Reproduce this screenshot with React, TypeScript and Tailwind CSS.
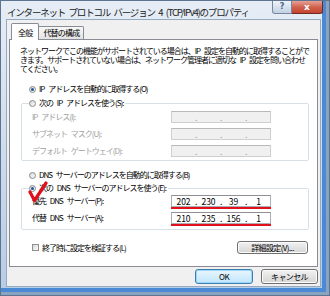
import React from 'react';

// Windows 7 style TCP/IPv4 properties dialog

function Radio({ checked }: { checked?: boolean }) {
  return (
    <span className="w-[7px] h-[7px] rounded-full border border-[#8a8a8a] bg-linear-to-br from-[#d6d6d6] to-[#fbfbfb] flex items-center justify-center shrink-0">
      {checked && <span className="w-[3px] h-[3px] rounded-full bg-[#24539f]" />}
    </span>
  );
}

function IpBox({ values, disabled }: { values?: string[]; disabled?: boolean }) {
  const segs = values || ['', '', '', ''];
  return (
    <div
      className={`w-[100px] h-[12px] border flex items-center text-[8.5px] leading-[10px] tracking-normal [word-spacing:0px] ${
        disabled ? 'border-[#cfcfcf] border-t-[#b9b9b9] bg-[#f0f0f0] text-[#a0a0a0]' : 'border-[#abadb3] border-t-[#8e9096] bg-white text-black'
      }`}
    >
      {segs.map((v, i) => (
        <React.Fragment key={i}>
          <span className="flex-1 text-center">{v}</span>
          {i < 3 && <span className="w-[2px] text-center">.</span>}
        </React.Fragment>
      ))}
    </div>
  );
}

function WinButton({ label, isDefault, className }: { label: string; isDefault?: boolean; className?: string }) {
  return (
    <div
      className={`rounded-[3px] border flex items-center justify-center text-[8px] tracking-[-0.6px] ${
        isDefault
          ? 'border-[#3c7fb1] bg-linear-to-b from-[#eaf6fd] to-[#bee6fd] shadow-[inset_0_0_0_1px_#9fd5f5]'
          : 'border-[#707070] bg-linear-to-b from-[#f2f2f2] to-[#d5d5d5] shadow-[inset_0_0_0_1px_#fcfcfc]'
      } ${className || ''}`}
    >
      {label}
    </div>
  );
}

export default function App() {
  return (
    <div className="w-[330px] h-[296px] relative overflow-hidden flex flex-col border border-[#5d7390] bg-linear-to-b from-[#e6edf6] via-[#cfdcec] to-[#b6cbe5] shadow-[inset_-3px_-3px_0_#8aa3c0,inset_-7px_-7px_0_#4a8ad4] font-['Noto_Sans_CJK_JP',sans-serif] text-black">
      {/* title bar */}
      <div className="h-[18px] flex items-start shrink-0">
        <div className="flex-1 pl-[6px] pt-[5px] text-[9.5px] leading-[12px] tracking-[-1.2px] [word-spacing:2.5px] text-[#222] whitespace-nowrap">
          インターネット プロトコル バージョン 4 (TCP/IPv4)のプロパティ
        </div>
        <div className="flex mr-[6px]">
          <div className="w-[20px] h-[13px] border border-[#7688a0] border-t-0 rounded-bl-[3px] bg-linear-to-b from-[#eef3f9] to-[#c3d1e3] flex items-center justify-center text-[8px] leading-none font-bold text-[#4c6485] font-['DejaVu_Sans',sans-serif]">
            ?
          </div>
          <div className="w-[31px] h-[13px] border border-[#6f2b22] border-t-0 border-l-0 rounded-br-[3px] bg-linear-to-b from-[#e7a195] via-[#d0624f] to-[#c4432f] flex items-center justify-center text-[9px] leading-none font-bold text-white font-['DejaVu_Sans',sans-serif]">
            x
          </div>
        </div>
      </div>

      {/* client area */}
      <div className="ml-[5px] mr-[8px] mb-[8px] flex-1 border border-[#95a9c0] bg-[#f0f0f0] flex flex-col px-[2px] pt-[3px]">
        {/* tabs */}
        <div className="h-[16px] flex items-end pl-[2px] text-[8px] tracking-[-0.8px]">
          <div className="relative z-10 -mb-px h-[17px] px-[6px] bg-white border border-b-0 border-[#898c95] rounded-t-[2px] flex items-center pt-[1px]">
            全般
          </div>
          <div className="h-[13px] px-[4px] border border-b-0 border-l-0 border-[#898c95] rounded-tr-[2px] bg-linear-to-b from-[#f7f7f7] to-[#e3e3e3] flex items-center">
            代替の構成
          </div>
        </div>

        {/* panel */}
        <div className="h-[228px] border border-[#898c95] bg-white flex flex-col text-[8px] tracking-[-1px] [word-spacing:3px]">
          <p className="pt-[6px] pl-[10px] leading-[9px] whitespace-nowrap">
            ネットワークでこの機能がサポートされている場合は、IP 設定を自動的に取得することがで
            <br />
            きます。サポートされていない場合は、ネットワーク管理者に適切な IP 設定を問い合わせ
            <br />
            てください。
          </p>

          <div className="mt-[10px] h-[12px] pl-[19px] flex items-center gap-[3px]">
            <Radio checked />
            <span>IP アドレスを自動的に取得する(O)</span>
          </div>

          <fieldset className="mt-[2px] ml-[11px] mr-[8px] border border-[#d5dfe5] rounded-[2px] pt-[2px] pb-[3px] pl-[10px] flex flex-col gap-[5px]">
            <legend className="-ml-[3px] pr-[2px]">
              <span className="h-[12px] flex items-center gap-[3px]">
                <Radio />
                <span>次の IP アドレスを使う(S):</span>
              </span>
            </legend>
            {['IP アドレス(I):', 'サブネット マスク(U):', 'デフォルト ゲートウェイ(D):'].map((l) => (
              <div key={l} className="flex items-center h-[12px]">
                <span className="w-[139px] text-[#a0a0a0]">{l}</span>
                <IpBox disabled />
              </div>
            ))}
          </fieldset>

          <div className="mt-[8px] h-[12px] pl-[19px] flex items-center gap-[3px]">
            <Radio />
            <span>DNS サーバーのアドレスを自動的に取得する(B)</span>
          </div>

          <fieldset className="mt-[1px] ml-[11px] mr-[8px] border border-[#d5dfe5] rounded-[2px] pt-[1px] pb-[3px] pl-[10px] flex flex-col gap-[3px]">
            <legend className="-ml-[3px] pr-[2px]">
              <span className="h-[12px] flex items-center gap-[3px]">
                <Radio checked />
                <span>次の DNS サーバーのアドレスを使う(E):</span>
              </span>
            </legend>
            {[
              { l: '優先 DNS サーバー(P):', v: ['202', '230', '39', '1'] },
              { l: '代替 DNS サーバー(A):', v: ['210', '235', '156', '1'] },
            ].map((r) => (
              <div key={r.l} className="flex items-start">
                <span className="w-[139px] h-[12px] flex items-center">{r.l}</span>
                <div className="flex flex-col">
                  <IpBox values={r.v} />
                  <div className="w-[100px] h-[2px] bg-[#e2101c]" />
                </div>
              </div>
            ))}
          </fieldset>

          <div className="mt-[11px] h-[13px] pl-[22px] pr-[9px] flex items-center">
            <span className="w-[7px] h-[7px] border border-[#8e8f8f] bg-linear-to-br from-[#dcdcdc] to-[#fafafa] shrink-0" />
            <span className="ml-[3px] flex-1">終了時に設定を検証する(L)</span>
            <WinButton label="詳細設定(V)..." className="w-[71px] h-[13px]" />
          </div>
        </div>

        {/* dialog buttons */}
        <div className="mt-[2px] flex justify-end gap-[8px]">
          <WinButton label="OK" isDefault className="w-[58px] h-[15px]" />
          <WinButton label="キャンセル" className="w-[57px] h-[15px]" />
        </div>
      </div>

      {/* red check mark annotation */}
      <svg className="absolute left-[27px] top-[180px]" width="20" height="22" viewBox="0 0 20 22">
        <path d="M2 11 L6.5 19.5 L18 2" fill="none" stroke="#e0101c" strokeWidth="3.2" strokeLinecap="round" strokeLinejoin="round" />
      </svg>
    </div>
  );
}
